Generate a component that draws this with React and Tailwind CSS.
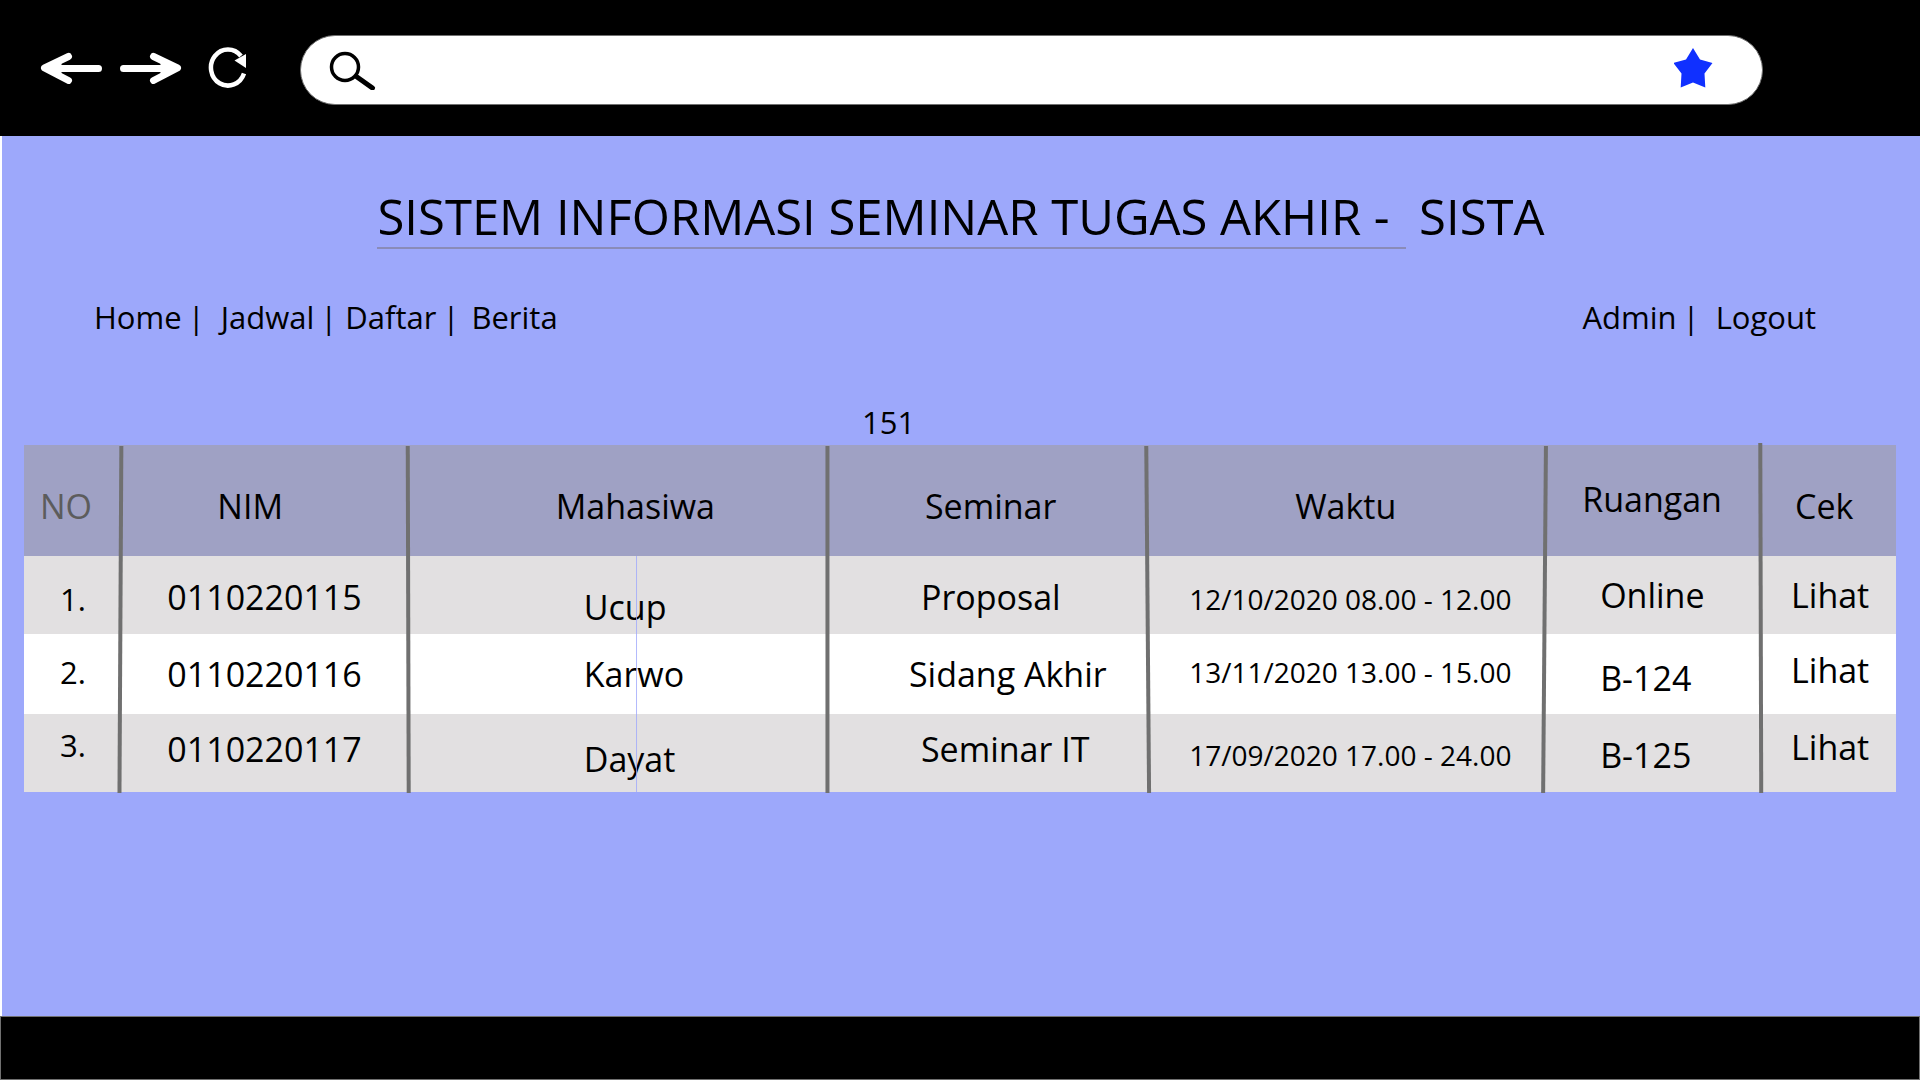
const navLeft = [
  { label: 'Home', gap: 'mr-4' },
  { label: 'Jadwal', gap: 'mr-2' },
  { label: 'Daftar', gap: 'mr-3' },
  { label: 'Berita' },
];

const headers = [
  { label: 'NO', className: 'pl-4 pt-2.5 text-[#5c5c5c]' },
  { label: 'NIM', className: 'pl-24 pt-2.5' },
  { label: 'Mahasiwa', className: 'pl-[148px] pt-2.5' },
  { label: 'Seminar', className: 'pl-24 pt-2.5' },
  { label: 'Waktu', className: 'pl-[148px] pt-2.5' },
  { label: 'Ruangan', className: 'pl-10 pb-1' },
  { label: 'Cek', className: 'pl-8 pt-2.5' },
];

const rows = [
  {
    height: 'h-[78px]',
    color: 'bg-[#e2e0e1]',
    no: ['1.', 'pt-2'],
    nim: ['0110220115', 'pt-1'],
    name: ['Ucup', 'pt-6'],
    seminar: ['Proposal', 'pl-[92px] pt-1'],
    time: ['12/10/2020 08.00 - 12.00', 'pt-2'],
    room: ['Online', ''],
    check: '',
  },
  {
    height: 'h-[80px]',
    color: 'bg-white',
    no: ['2.', 'pb-1'],
    nim: ['0110220116', ''],
    name: ['Karwo', ''],
    seminar: ['Sidang Akhir', 'pl-20'],
    time: ['13/11/2020 13.00 - 15.00', 'pb-1'],
    room: ['B-124', 'pt-2'],
    check: 'pb-2',
  },
  {
    height: 'h-[78px]',
    color: 'bg-[#e2e0e1]',
    no: ['3.', 'pb-4'],
    nim: ['0110220117', 'pb-2'],
    name: ['Dayat', 'pt-3'],
    seminar: ['Seminar IT', 'pl-[92px] pb-2'],
    time: ['17/09/2020 17.00 - 24.00', 'pt-1'],
    room: ['B-125', 'pt-1'],
    check: 'pb-3',
  },
];

// Hand-drawn column rules: horizontal position at the top and bottom, and start height.
const rules = [
  ['5.2%', '5.1%', 9],
  ['20.5%', '20.55%', 9],
  ['42.92%', '42.92%', 9],
  ['59.95%', '60.1%', 9],
  ['81.3%', '81.15%', 9],
  ['92.75%', '92.8%', 6],
];

function BrowserBar() {
  return (
    <header className="flex h-[136px] items-center bg-black pb-px pl-10 pr-[157px]">
      <button type="button" aria-label="Back">
        <svg className="h-8 w-[62px]" viewBox="0 0 62 32" fill="none" stroke="#fff" strokeWidth="7" strokeLinecap="round" strokeLinejoin="round">
          <path d="M58.5 16.5H6M28.5 4.5 4.5 16 28.5 28.5" />
          <path d="M5 16 20 10v12z" fill="#fff" strokeWidth="3" />
        </svg>
      </button>
      <button type="button" aria-label="Forward" className="ml-[18px]">
        <svg className="h-8 w-[62px]" viewBox="0 0 62 32" fill="none" stroke="#fff" strokeWidth="7" strokeLinecap="round" strokeLinejoin="round">
          <path d="M3.5 16.5H56M33.5 4.5 57.5 16 33.5 28.5" />
          <path d="M57 16 42 10v12z" fill="#fff" strokeWidth="3" />
        </svg>
      </button>
      <button type="button" aria-label="Reload" className="ml-[26px]">
        <svg className="h-[42px] w-10" viewBox="0 0 40 42" fill="none">
          <path d="M36 26.5A17 18 0 1 1 33 9" stroke="#fff" strokeWidth="4.5" />
          <path d="M26.5 13.5 38 7v14z" fill="#fff" />
        </svg>
      </button>
      <div className="ml-[52px] mt-1 flex h-[70px] flex-1 items-center rounded-full border border-[#707070] bg-white pl-7 pr-12">
        <svg className="h-10 w-12 shrink-0" viewBox="0 0 48 40" fill="none" stroke="#000">
          <circle cx="16" cy="17" r="13.5" strokeWidth="3.5" />
          <path d="m28 27 15.5 11" strokeWidth="5" strokeLinecap="round" />
        </svg>
        <input type="text" aria-label="Address" className="h-full min-w-0 flex-1 bg-transparent px-2 text-[31px] outline-none" />
        <button type="button" aria-label="Bookmark" className="pb-1">
          <svg className="h-10 w-10" viewBox="0 0 40 40" fill="#1030ff">
            <path d="m19 0 7 11.5L38.5 15 30.5 25.5l.8 14L19 34.5 6.7 39.5l.8-14L-.5 15 12 11.5z" />
          </svg>
        </button>
      </div>
    </header>
  );
}

export default function App() {
  return (
    <div className="flex min-h-screen flex-col bg-[#9da8fb] font-['Open_Sans','Noto_Sans',sans-serif] text-black">
      <BrowserBar />
      <main className="flex-1 border-l-2 border-white">
        <h1 className="mt-[49px] whitespace-pre text-center text-[49px] leading-[62px]">
          <span className="inline-block border-b-2 border-[#8a8bb8] pr-1">SISTEM INFORMASI SEMINAR TUGAS AKHIR - </span>
          {' SISTA'}
        </h1>

        <nav className="mt-[46px] flex justify-between pl-[92px] pr-[104px] text-[31px] leading-[44px]">
          <ul className="flex">
            {navLeft.map((item) => (
              <li key={item.label} className="flex">
                <a href="#">{item.label}</a>
                {item.gap && <span className={`ml-1.5 ${item.gap}`}>|</span>}
              </li>
            ))}
          </ul>
          <ul className="flex">
            <li className="flex">
              <a href="#">Admin</a>
              <span className="ml-1.5 mr-4">|</span>
            </li>
            <li>
              <a href="#">Logout</a>
            </li>
          </ul>
        </nav>

        <p className="mt-[61px] pb-px pl-[860px] text-[31px] leading-[44px]">151</p>

        <div className="relative ml-[22px] mr-6">
          <table className="w-full table-fixed border-collapse text-left text-[34px] leading-[44px]">
            <colgroup>
              <col className="w-[5.2%]" />
              <col className="w-[15.3%]" />
              <col className="w-[22.5%]" />
              <col className="w-[17%]" />
              <col className="w-[21.1%]" />
              <col className="w-[11.8%]" />
              <col className="w-[7.1%]" />
            </colgroup>
            <thead>
              <tr className="h-[111px] bg-[#9fa1c4]">
                {headers.map((h) => (
                  <th key={h.label} scope="col" className={`font-normal ${h.className}`}>
                    {h.label}
                  </th>
                ))}
              </tr>
            </thead>
            <tbody>
              {rows.map((r) => (
                <tr key={r.nim[0]} className={`${r.height} ${r.color}`}>
                  <td className={`pl-9 text-[31px] ${r.no[1]}`}>{r.no[0]}</td>
                  <td className={`pl-[46px] ${r.nim[1]}`}>{r.nim[0]}</td>
                  <td className={`pl-44 ${r.name[1]}`}>{r.name[0]}</td>
                  <td className={r.seminar[1]}>{r.seminar[0]}</td>
                  <td className={`whitespace-nowrap pl-[42px] text-[28px] ${r.time[1]}`}>{r.time[0]}</td>
                  <td className={`pl-[58px] ${r.room[1]}`}>{r.room[0]}</td>
                  <td className={`pl-7 ${r.check}`}>
                    <a href="#">Lihat</a>
                  </td>
                </tr>
              ))}
            </tbody>
          </table>
          <svg className="pointer-events-none absolute -top-2 left-0 h-[356px] w-full" aria-hidden="true">
            <line x1="32.72%" x2="32.72%" y1="119" y2="355" stroke="#9da8fb" strokeOpacity="0.8" />
            {rules.map(([top, bottom, start]) => (
              <line key={top} x1={top} x2={bottom} y1={start} y2="356" stroke="#707070" strokeWidth="4" />
            ))}
          </svg>
        </div>
      </main>
      <footer className="h-16 border border-[#707070] bg-black" />
    </div>
  );
}
